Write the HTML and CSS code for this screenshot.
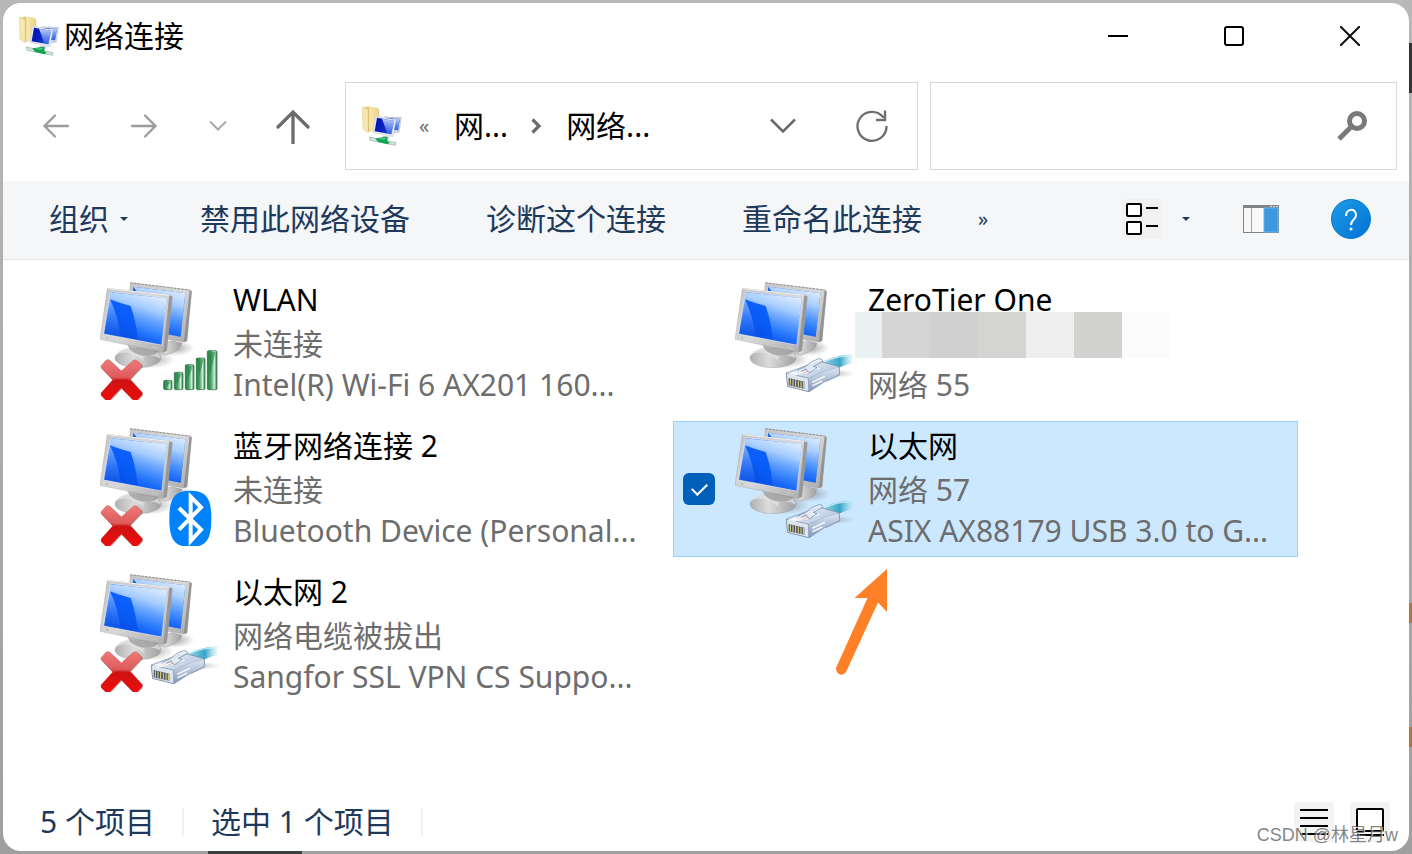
FILE: index.html
```html
<!DOCTYPE html>
<html lang="zh-CN">
<head>
<meta charset="utf-8">
<title>网络连接</title>
<link rel="stylesheet" href="styles.css">
</head>
<body>
<svg class="defs" aria-hidden="true">
  <defs>
    <linearGradient id="screen" x1="0" y1="1" x2="0.7" y2="0"><stop offset="0" stop-color="#0646d8"/><stop offset=".5" stop-color="#0a5cf8"/><stop offset="1" stop-color="#1268ff"/></linearGradient>
    <linearGradient id="shine" x1="0.75" y1="0" x2="0.4" y2="1"><stop offset="0" stop-color="#f0f8ff" stop-opacity=".95"/><stop offset=".3" stop-color="#c2e0ff" stop-opacity=".85"/><stop offset=".65" stop-color="#5ba2ff" stop-opacity=".6"/><stop offset="1" stop-color="#1268ff" stop-opacity=".1"/></linearGradient>
    <linearGradient id="gloss" x1="0" y1="0" x2="0" y2="1"><stop offset="0" stop-color="#d9ecff" stop-opacity=".6"/><stop offset="1" stop-color="#3f8cff" stop-opacity=".1"/></linearGradient>
    <linearGradient id="frame" x1="0" y1="0" x2="1" y2="1"><stop offset="0" stop-color="#c4c4c4"/><stop offset=".5" stop-color="#d8d8d8"/><stop offset="1" stop-color="#a9a9a9"/></linearGradient>
    <linearGradient id="base" x1="0" y1="0" x2="1" y2="0"><stop offset="0" stop-color="#b0b0b0"/><stop offset=".4" stop-color="#dcdcdc"/><stop offset=".65" stop-color="#c2c2c2"/><stop offset="1" stop-color="#a0a0a0"/></linearGradient>
    <radialGradient id="shade"><stop offset="0" stop-color="#777" stop-opacity=".7"/><stop offset="1" stop-color="#888" stop-opacity="0"/></radialGradient>
    <linearGradient id="red" x1="0" y1="0" x2="0" y2="1"><stop offset="0" stop-color="#ee7a78"/><stop offset=".42" stop-color="#dd5c5c"/><stop offset=".5" stop-color="#cf1212"/><stop offset="1" stop-color="#f00b0b"/></linearGradient>
    <linearGradient id="bar" x1="0" y1="0" x2="1" y2="0"><stop offset="0" stop-color="#1f7b3f"/><stop offset=".4" stop-color="#4fa66a"/><stop offset=".72" stop-color="#c9f0d3"/><stop offset="1" stop-color="#2c7d47"/></linearGradient>
    <linearGradient id="cable" x1="0" y1="0" x2="1" y2="0"><stop offset="0" stop-color="#bfe9f4"/><stop offset=".65" stop-color="#36a5c6"/><stop offset="1" stop-color="#7ccfe6" stop-opacity=".15"/></linearGradient>
    <linearGradient id="plug" x1="0" y1="0" x2="1" y2="1"><stop offset="0" stop-color="#f4f8fd"/><stop offset=".6" stop-color="#bccbe2"/><stop offset="1" stop-color="#7487a8"/></linearGradient>
    <linearGradient id="side" x1="0" y1="0" x2="0" y2="1"><stop offset="0" stop-color="#dde7f5"/><stop offset="1" stop-color="#8497b8"/></linearGradient>
    <linearGradient id="folder" x1="0" y1="0" x2="1" y2="0"><stop offset="0" stop-color="#f9eab0"/><stop offset=".35" stop-color="#dfc26c"/><stop offset=".45" stop-color="#f8e9b3"/><stop offset="1" stop-color="#ecd282"/></linearGradient>
    <linearGradient id="mini" x1="0" y1="0" x2="1" y2="0.3"><stop offset="0" stop-color="#000fae"/><stop offset=".55" stop-color="#0a22bd"/><stop offset="1" stop-color="#1d50dd"/></linearGradient>
    <linearGradient id="minishine" x1="0" y1="0" x2="0" y2="1"><stop offset="0" stop-color="#d5e2ff" stop-opacity=".9"/><stop offset="1" stop-color="#3d6fe8" stop-opacity=".6"/></linearGradient>
    <linearGradient id="helpfill" x1="0" y1="0" x2="1" y2="1"><stop offset="0" stop-color="#1f9be6"/><stop offset="1" stop-color="#0072d6"/></linearGradient>

    <symbol id="computers" viewBox="30 30 360 360">
      <ellipse cx="252" cy="234" rx="62" ry="24" fill="url(#shade)"/>
      <path d="M200 225 246 212 276 220Q270 244 226 256L190 246Z" fill="url(#base)" stroke="#8b8b8b"/>
      <path d="M121 38 299 60 305 63 291 213 280 216 232 208 110 180Z" fill="url(#frame)" stroke="#989898"/>
      <path d="M299 61 305 64 291 213 281 216Z" fill="#939393"/>
      <path d="M130 50 286 70 272 200 120 170Z" fill="url(#screen)"/>
      <path d="M130 50 286 70 272 200 235 194Z" fill="url(#shine)"/>
      <path d="M121 38 299 60" stroke="#707070" stroke-width="2" stroke-dasharray="7 4"/>
      <ellipse cx="178" cy="268" rx="76" ry="28" fill="url(#shade)"/>
      <ellipse cx="144" cy="264" rx="69" ry="29" fill="url(#base)" stroke="#929292"/>
      <path d="M77 256Q86 238 118 232L186 240Q211 247 212 266Q190 252 166 258Q150 268 176 288Q150 260 118 249Q92 244 77 256Z" fill="#e1e1e1" opacity=".75"/>
      <path d="M112 224 206 242Q200 258 160 257Q120 250 112 224Z" fill="#8b8b8b" opacity=".6"/>
      <path d="M52 55 238 75 247 79 230 242 220 247 30 208Z" fill="url(#frame)" stroke="#929292"/>
      <path d="M238 76 247 80 230 242 220 247Z" fill="#979797"/>
      <path d="M53 56 238 76" stroke="#f2f2f2" stroke-width="3"/>
      <path d="M62 65 231 84 215 225 41 192Z" fill="url(#screen)" stroke="#f3f3f3" stroke-width="2"/>
      <path d="M62 67 230 85 215 224 143 211Q140 160 122 108 90 100 59 88Z" fill="url(#shine)"/>
      <path d="M58 84Q84 135 92 202L42 191Z" fill="url(#gloss)"/>
      <circle cx="52" cy="204" r="2" fill="#45bd5f"/><path d="M191 229v5M201 231v5" stroke="#ededed" stroke-width="2"/>
    </symbol>
    <symbol id="cross" viewBox="30 27 360 360">
      <path d="M53 270Q58 266 63 270L97 303 133 270Q138 265 144 270L157 282Q160 287 156 292L124 326 159 367Q162 372 157 377L142 392Q137 396 132 391L96 354 61 392Q56 396 51 391L36 377Q32 372 36 367L71 330 36 294Q32 289 36 284Z" fill="#444" opacity=".35"/>
      <path d="M49 267Q54 264 59 268L94 300 130 268Q135 264 140 268L154 280Q157 285 153 290L120 325 156 364Q159 369 154 374L140 389Q135 393 130 388L94 351 58 389Q53 393 48 388L34 374Q31 369 35 364L68 327 35 292Q31 287 35 282Z" fill="url(#red)" stroke="#b33"/>
      <path d="M62 333Q94 305 128 333L120 325Q94 300 68 327Z" fill="#e45b5b" opacity=".6"/>
    </symbol>
    <symbol id="signal" viewBox="30 28 360 360">
      <g fill="url(#bar)" stroke="#23683a" stroke-width="2"><rect x="221" y="329" width="25" height="28" rx="4"/><rect x="253" y="305" width="26" height="52" rx="4"/><rect x="286" y="282" width="26" height="75" rx="4"/><rect x="319" y="262" width="26" height="95" rx="4"/><rect x="352" y="240" width="29" height="117" rx="4"/></g>
      <path d="M227 334q10-5 15 0l-13 16zM259 310q10-5 16 0l-14 30zM292 287q10-5 16 0l-14 42zM325 267q10-5 16 0l-14 52zM358 246q10-5 18 0l-16 66z" fill="#1f7a41" opacity=".55"/>
    </symbol>
    <symbol id="bluetooth" viewBox="30 30 360 360">
      <path d="M301 224C350 224 364 248 364 308S350 393 301 393 238 368 238 308 252 224 301 224Z" fill="#0082fc"/>
      <path d="M267 276 333 341 302 375V242L333 274 267 341" fill="none" stroke="#fff" stroke-width="12"/>
    </symbol>
    <symbol id="ethernet" viewBox="30 21 360 360">
      <ellipse cx="330" cy="302" rx="62" ry="13" fill="url(#shade)" opacity=".6"/>
      <path d="M276 275Q315 250 382 243V270Q340 280 304 306Z" fill="url(#cable)"/>
      <path d="M290 270Q326 251 376 248" fill="none" stroke="#e6fbff" stroke-width="4" opacity=".7"/>
      <path d="M184 300 246 277 289 266 343 281 344 306 306 324 298 326 252 356 188 340Z" fill="url(#plug)" stroke="#6f82a2" stroke-width="2"/>
      <path d="M184 300 250 315 252 356 188 340Z" fill="#dce5f0" stroke="#7788a2" stroke-width="2"/>
      <path d="M250 315 305 292 342 283 343 304 306 322 252 356Z" fill="url(#side)" stroke="#7f92b2"/>
      <path d="M262 328 300 310M262 338 292 324" stroke="#fff" stroke-width="5" opacity=".85"/>
      <path d="M191 315 238 326V347L191 337Z" fill="#4b5261"/>
      <path d="M196 317v20M204 319v20M212 321v20M220 323v20M228 325v20M235 327v19" stroke="#e9df8a" stroke-width="3"/>
      <path d="M211 296 262 280 294 285 244 304Z" fill="#e8f4fa" stroke="#9bb0cc"/>
      <path d="M219 297 254 287M228 302 267 289" stroke="#e9aaa0" stroke-width="3"/>
      <path d="M219 291Q244 283 258 267L280 257Q292 255 294 265L265 280 276 284 253 300 243 287 220 301Z" fill="#e2ecf8" fill-opacity=".8" stroke="#6e83a6" stroke-width="2"/>
      <path d="M188 302 222 293 240 300 206 309Z" fill="#fff" opacity=".7"/>
    </symbol>
    <symbol id="netfolder" viewBox="0 0 120 120">
      <path d="M2 4 22 2 48 7 51 12V66L18 79 3 70Z" fill="url(#folder)" stroke="#e1ca83"/>
      <path d="M2 4 18 11V79L3 70Z" fill="#f7e8ad" stroke="#dfc67a"/>
      <path d="M67 32 118 34 112 78 98 81 67 70Z" fill="#cdd5e9" stroke="#a7aec5"/>
      <path d="M71 36 114 38 108 73 72 68Z" fill="url(#mini)"/>
      <path d="M92 37 114 38 108 73 98 71Z" fill="url(#minishine)"/>
      <path d="M40 30 102 41 93 92 33 80Z" fill="#e6e9f2" stroke="#b4b8c8"/>
      <path d="M45 35 96 44 88 85 38 76Z" fill="url(#mini)"/>
      <path d="M60 38 96 44 88 85 76 82Z" fill="url(#minishine)"/>
      <path d="M64 89 83 92 76 104 58 99Z" fill="#b8c3c5"/>
      <path d="M22 93 46 98 102 110 100 118 62 110 24 103Z" fill="#d1e2dc" stroke="#9ab1ac" stroke-width="2"/>
      <path d="M40 97 75 92 76 106 83 109 77 115 48 108Z" fill="#12a354"/>
      <path d="M43 99 71 95 69 101Z" fill="#4bd286"/>
    </symbol>
  </defs>
</svg>

<main class="window">
  <header class="titlebar">
    <svg class="folder-icon"><use href="#netfolder"/></svg>
    <h1 class="title">网络连接</h1>
    <div class="captions">
      <button class="caption" aria-label="最小化"><svg class="glyph20" viewBox="0 0 20 20"><path d="M0 10H20" stroke="#000" stroke-width="2"/></svg></button>
      <button class="caption" aria-label="最大化"><svg class="glyph20" viewBox="0 0 20 20"><rect x="1" y="1" width="18" height="18" rx="2" fill="none" stroke="#000" stroke-width="2"/></svg></button>
      <button class="caption" aria-label="关闭"><svg class="glyph20" viewBox="0 0 20 20"><path d="M0 0 20 20M20 0 0 20" stroke="#111" stroke-width="2"/></svg></button>
    </div>
  </header>

  <nav class="navbar">
    <div class="history">
      <button class="nav-btn" aria-label="后退"><svg viewBox="0 0 36 36"><path d="M30 18H7M17 7.500 6.500 18 17 28.500" fill="none" stroke="#9c9c9c" stroke-width="2.300" stroke-linecap="round"/></svg></button>
      <button class="nav-btn" aria-label="前进"><svg viewBox="0 0 36 36"><path d="M6 18H29M19 7.500 29.500 18 19 28.500" fill="none" stroke="#9c9c9c" stroke-width="2.300" stroke-linecap="round"/></svg></button>
      <button class="nav-btn narrow" aria-label="最近浏览的位置"><svg viewBox="0 0 36 36"><path d="M10 13.500 18 21.500 26 13.500" fill="none" stroke="#a8a8a8" stroke-width="2"/></svg></button>
      <button class="nav-btn" aria-label="上移"><svg viewBox="0 0 36 36"><path d="M18 35V5M3 19 18 4 33 19" fill="none" stroke="#6b6b6b" stroke-width="3.300" stroke-linecap="round"/></svg></button>
    </div>
    <div class="address">
      <svg class="folder-icon"><use href="#netfolder"/></svg>
      <button class="crumb-more">«</button>
      <button class="crumb">网...</button>
      <svg class="crumb-sep" viewBox="0 0 12 18"><path d="M2.500 2.500 9 9 2.500 15.500" fill="none" stroke="#6b6b6b" stroke-width="3.200"/></svg>
      <button class="crumb">网络...</button>
      <button class="address-btn push" aria-label="展开地址"><svg viewBox="0 0 36 36"><path d="M6 11.500 18 23.500 30 11.500" fill="none" stroke="#6b6b6b" stroke-width="2.500"/></svg></button>
      <button class="address-btn" aria-label="刷新"><svg viewBox="0 0 36 36"><path d="M32.500 18A14.500 14.500 0 1 1 29.500 9.500M31 2.500V12H22" fill="none" stroke="#707070" stroke-width="2.400"/></svg></button>
    </div>
    <form class="search">
      <input class="search-input" type="search" aria-label="搜索">
      <button class="search-btn" type="button" aria-label="搜索"><svg viewBox="0 0 30 30"><circle cx="20" cy="10" r="7.500" fill="none" stroke="#797979" stroke-width="5"/><path d="M14 16 2 28" stroke="#797979" stroke-width="5"/></svg></button>
    </form>
  </nav>

  <div class="toolbar">
    <button class="tool">组织<span class="caret"></span></button>
    <button class="tool">禁用此网络设备</button>
    <button class="tool">诊断这个连接</button>
    <button class="tool">重命名此连接</button>
    <button class="tool more">»</button>
    <div class="tool-end">
      <button class="tool-icon" aria-label="更改视图"><svg class="view-icon" viewBox="0 0 40 40"><rect width="40" height="40" rx="2" fill="#f1f1f1"/><g fill="#fff" stroke="#000" stroke-width="2"><rect x="5" y="5" width="14" height="12" rx="1"/><rect x="5" y="23" width="14" height="12" rx="1"/></g><path d="M24 9H36M24 27H36" stroke="#000" stroke-width="2"/></svg></button>
      <button class="tool-icon view-menu" aria-label="更多选项"><span class="caret"></span></button>
      <button class="tool-icon pane" aria-label="预览窗格"><svg class="pane-icon" viewBox="0 0 36 28"><rect x=".5" y=".5" width="35" height="27" fill="#f8f8f8" stroke="#7f8386"/><path d="M0 0H36V3H0Z" fill="#7f8386"/><path d="M27 1.500h2M30 1.500h2M33 1.500h2" stroke="#e0e0e0"/><path d="M8.500 3V27" stroke="#a5a5a5"/><rect x="21" y="3" width="14" height="24" fill="#3d97e1" stroke="#66b3ef"/></svg></button>
      <button class="help" aria-label="帮助"><svg viewBox="0 0 40 40"><circle cx="20" cy="20" r="19.500" fill="url(#helpfill)" stroke="#0b79c8"/><path d="M15 17C15 9 25 9 25 16 25 21 20 20 20 26" fill="none" stroke="#fff" stroke-width="2"/><circle cx="20" cy="30" r="1.500" fill="#fff"/></svg></button>
    </div>
  </div>

  <section class="content">
    <ul class="connections">
      <li class="connection">
        <div class="device"><svg class="layer"><use href="#computers"/></svg><svg class="layer"><use href="#cross"/></svg><svg class="layer"><use href="#signal"/></svg></div>
        <div class="info"><p class="name">WLAN</p><p class="detail">未连接</p><p class="detail">Intel(R) Wi-Fi 6 AX201 160...</p></div>
      </li>
      <li class="connection">
        <div class="device"><svg class="layer"><use href="#computers"/></svg><svg class="layer"><use href="#ethernet"/></svg></div>
        <div class="info"><p class="name">ZeroTier One</p><p class="detail">&nbsp;</p><p class="detail">网络 55</p><div class="mask"></div></div>
      </li>
      <li class="connection">
        <div class="device"><svg class="layer"><use href="#computers"/></svg><svg class="layer"><use href="#cross"/></svg><svg class="layer"><use href="#bluetooth"/></svg></div>
        <div class="info"><p class="name">蓝牙网络连接 2</p><p class="detail">未连接</p><p class="detail">Bluetooth Device (Personal...</p></div>
      </li>
      <li class="connection selected">
        <input class="check" type="checkbox" id="pick" checked>
        <div class="device"><svg class="layer"><use href="#computers"/></svg><svg class="layer"><use href="#ethernet"/></svg></div>
        <div class="info"><label class="name" for="pick">以太网</label><p class="detail">网络 57</p><p class="detail">ASIX AX88179 USB 3.0 to G...</p></div>
        <svg class="pointer" viewBox="0 0 54 108"><path d="M50 0V43L41 33.500 9 103Q6 107 2 105-1 103-1 99L30.500 29H17.500Z" fill="#ff8027"/></svg>
      </li>
      <li class="connection">
        <div class="device"><svg class="layer"><use href="#computers"/></svg><svg class="layer"><use href="#cross"/></svg><svg class="layer"><use href="#ethernet"/></svg></div>
        <div class="info"><p class="name">以太网 2</p><p class="detail">网络电缆被拔出</p><p class="detail">Sangfor SSL VPN CS Suppo...</p></div>
      </li>
    </ul>
  </section>

  <footer class="statusbar">
    <span class="status">5 个项目</span>
    <span class="status">选中 1 个项目</span>
    <div class="views">
      <button class="view-btn" aria-label="详细信息"><svg viewBox="0 0 40 40"><path d="M6 8H34M6 16H34M6 24H34M6 32H34" stroke="#000" stroke-width="2"/></svg></button>
      <button class="view-btn" aria-label="大图标"><svg viewBox="0 0 40 40"><rect x="7" y="7" width="26" height="22" rx="1" fill="#fff" stroke="#000" stroke-width="2"/><path d="M7 33H34" stroke="#000" stroke-width="2"/></svg></button>
    </div>
  </footer>
</main>
<div class="watermark">CSDN @林星月w</div>
</body>
</html>
```
FILE: styles.css
```css
* { box-sizing: border-box; }

body {
  margin: 0;
  min-height: 100vh;
  padding: 3px;
  display: flex;
  font-family: "Noto Sans", "Noto Sans CJK SC", sans-serif;
  font-size: 30px;
  line-height: 40px;
  color: #000;
  background:
    linear-gradient(#333, #333) right 43px / 3px 50px no-repeat,
    linear-gradient(#b5713f, #b5713f) right 603px / 3px 20px no-repeat,
    linear-gradient(#b5713f, #b5713f) right 727px / 3px 20px no-repeat,
    linear-gradient(#3c403f, #3c403f) 208px bottom / 94px 3px no-repeat,
    linear-gradient(#b8b8b8, #9f9f9f);
}

button {
  margin: 0;
  padding: 0;
  border: 0;
  background: none;
  font: inherit;
  color: inherit;
  display: flex;
  align-items: center;
  justify-content: center;
}

svg { display: block; flex: none; }
.defs { position: absolute; width: 0; height: 0; }

.window {
  flex: 1;
  min-width: 0;
  display: flex;
  flex-direction: column;
  background: #fff;
  border-radius: 18px;
  overflow: hidden;
}

.titlebar {
  display: flex;
  align-items: center;
  height: 66px;
  padding-left: 16px;
}
.folder-icon { width: 40px; height: 40px; flex: none; }
.title {
  margin: 0 0 0 5px;
  font-size: 30px;
  font-weight: 400;
}
.captions { display: flex; margin: 0 1px 0 auto; }
.caption { width: 116px; height: 66px; }
.glyph20 { width: 20px; height: 20px; }

.navbar {
  display: grid;
  grid-template-columns: 314px minmax(0, 573fr) minmax(0, 467fr);
  column-gap: 12px;
  padding: 13px 12px 11px 16px;
}
.history { display: flex; width: 314px; align-items: center; }
.nav-btn { width: 74px; height: 66px; }
.nav-btn + .nav-btn { margin-left: 14px; }
.nav-btn.narrow { width: 62px; margin-left: 6px; }
.nav-btn.narrow + .nav-btn { margin-left: 7px; }
.nav-btn svg, .address-btn svg { width: 36px; height: 36px; }

.address, .search {
  height: 88px;
  border: 1px solid #d9d9d9;
  display: flex;
  align-items: center;
  background: #fff;
}
.address { padding: 0 27px 0 16px; }
.crumb-more { width: 44px; font-size: 20px; color: #6b6b6b; }
.crumb { margin-left: 8px; }
.crumb-sep { width: 12px; height: 18px; margin: 0 16px 0 22px; }
.address-btn { width: 36px; height: 36px; }
.address-btn + .address-btn { margin-left: 53px; }
.push { margin-left: auto; }

.search { padding-right: 29px; }
.search-input {
  flex: 1;
  min-width: 0;
  height: 80px;
  padding: 0 16px;
  border: 0;
  outline: 0;
  background: none;
  font: inherit;
}
.search-btn svg { width: 30px; height: 30px; }

.toolbar {
  display: flex;
  align-items: center;
  gap: 76px;
  height: 79px;
  padding: 0 38px 2px 46px;
  background: #f4f6f8;
  border-bottom: 1px solid #e4e7ea;
  color: #1e395b;
  white-space: nowrap;
}
.tool .caret { margin: 0 -4px 0 11px; }
.tool.more { margin-left: -20px; font-size: 20px; }
.caret {
  border: 4px solid transparent;
  border-top-color: #1e395b;
  border-bottom: 0;
}
.tool-end { display: flex; align-items: center; margin-left: auto; }
.view-icon { width: 40px; height: 40px; }
.view-menu { width: 48px; height: 40px; }
.pane { margin: 0 52px 0 33px; }
.pane-icon { width: 36px; height: 28px; }
.help svg { width: 40px; height: 40px; }

.content { flex: 1; padding: 15px 32px 15px 35px; }
.connections {
  list-style: none;
  margin: 0;
  padding: 0;
  display: grid;
  grid-template-columns: repeat(auto-fill, 625px);
  gap: 10px;
}
.connection {
  position: relative;
  display: flex;
  height: 136px;
  padding: 5px 12px 0 62px;
}
.selected { background: #cce8ff; box-shadow: inset 0 0 0 1px #99d1ff; }
.device { display: grid; width: 120px; height: 120px; flex: none; }
.layer { grid-area: 1 / 1; width: 120px; height: 120px; }
.info { position: relative; flex: 1; min-width: 0; margin-left: 13px; white-space: nowrap; }
.name { display: block; margin: 0 0 3px; }
.detail { margin: 0; line-height: 41px; color: #6d6d6d; }

.mask {
  position: absolute;
  left: -13px;
  top: 32px;
  width: 315px;
  height: 46px;
  background: linear-gradient(90deg, #e9f1f3 27px, #d5d5d6 27px 75px, #d0d0d0 75px 123px, #d4d4d3 123px 171px, #eee 171px 219px, #d2d2d1 219px 267px, #fbfbfb 267px);
}

.check {
  position: absolute;
  left: 10px;
  top: 52px;
  width: 32px;
  height: 32px;
  margin: 0;
  appearance: none;
  background: #005fb8;
  border-radius: 6px;
}
.check:checked::after {
  content: "";
  position: absolute;
  left: 12px;
  top: 7px;
  width: 7px;
  height: 13px;
  border: solid #fff;
  border-width: 0 2px 2px 0;
  transform: rotate(45deg);
}
.pointer { position: absolute; left: 164px; top: 148px; width: 54px; height: 108px; overflow: visible; }

.statusbar {
  display: flex;
  align-items: center;
  height: 58px;
  padding: 0 19px 0 37px;
  color: #1e395b;
}
.status {
  line-height: 28px;
  padding-right: 27px;
  margin-right: 27px;
  border-right: 2px solid #f2f2f2;
}
.views { display: flex; gap: 16px; margin-left: auto; }
.view-btn { background: #f3f3f3; border-radius: 3px; }
.view-btn svg { width: 40px; height: 40px; }

.watermark {
  position: absolute;
  right: 14px;
  bottom: 4px;
  font-family: "Liberation Sans", "Noto Sans CJK SC", sans-serif;
  font-size: 18px;
  line-height: 30px;
  color: rgba(90, 90, 90, .75);
  text-shadow: 1px 1px 0 rgba(255, 255, 255, .7);
}
```
